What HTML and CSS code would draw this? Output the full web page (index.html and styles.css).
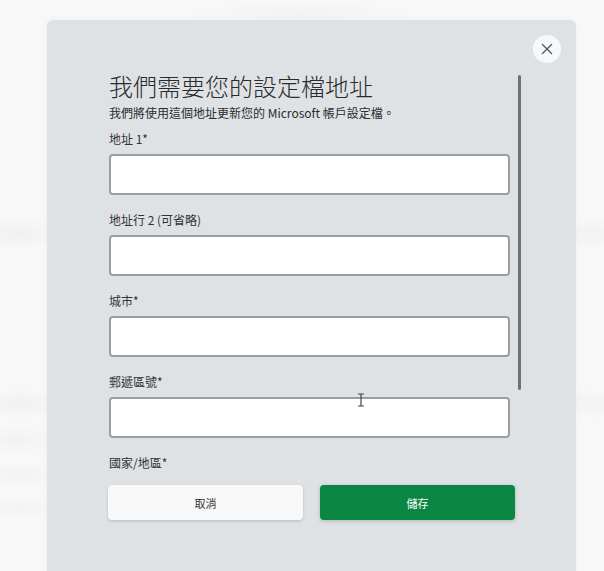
FILE: index.html
```html
<!DOCTYPE html>
<html lang="zh-Hant">
<head>
<meta charset="utf-8">
<title>設定檔地址</title>
<link rel="stylesheet" href="styles.css">
</head>
<body>
<div class="page">
  <div class="modal">
    <div class="modal-head">
      <button class="close" aria-label="關閉">
        <svg width="12" height="12" viewBox="0 0 12 12"><path d="M1.5 1.5 L10.5 10.5 M10.5 1.5 L1.5 10.5" stroke="#5a5a5a" stroke-width="1.4" stroke-linecap="round" fill="none"/></svg>
      </button>
    </div>
    <div class="modal-body">
      <div class="form">
        <h1 class="title">我們需要您的設定檔地址</h1>
        <p class="subtitle">我們將使用這個地址更新您的 Microsoft 帳戶設定檔。</p>
        <div class="field">
          <label class="label">地址 1*</label>
          <div class="input"></div>
        </div>
        <div class="field">
          <label class="label">地址行 2 (可省略)</label>
          <div class="input"></div>
        </div>
        <div class="field">
          <label class="label">城市*</label>
          <div class="input"></div>
        </div>
        <div class="field">
          <label class="label">郵遞區號*</label>
          <div class="input"></div>
        </div>
        <div class="field last">
          <label class="label">國家/地區*</label>
        </div>
        <div class="actions">
          <button class="btn cancel">取消</button>
          <button class="btn save">儲存</button>
        </div>
      </div>
      <div class="scroll-thumb"></div>
    </div>
    <svg class="ibeam" width="8" height="14" viewBox="0 0 8 14"><path d="M1 1 H7 M4 1 V13 M1 13 H7" stroke="#444" stroke-width="1.2" fill="none"/></svg>
  </div>
</div>
</body>
</html>
```
FILE: styles.css
```css
html, body {
  margin: 0;
  padding: 0;
}
body {
  width: 604px;
  height: 571px;
  overflow: hidden;
  font-family: "Noto Sans CJK TC", "Noto Sans", sans-serif;
  color: #2f2f2f;
  background-color: #f8f8f8;
  background-image:
    radial-gradient(ellipse 120px 14px at 300px 14px, rgba(0,0,0,0.025), rgba(0,0,0,0)),
    radial-gradient(ellipse 50px 16px at 18px 234px, rgba(0,0,0,0.03), rgba(0,0,0,0)),
    radial-gradient(ellipse 36px 16px at 592px 234px, rgba(0,0,0,0.028), rgba(0,0,0,0)),
    radial-gradient(ellipse 50px 16px at 18px 404px, rgba(0,0,0,0.03), rgba(0,0,0,0)),
    radial-gradient(ellipse 36px 16px at 592px 404px, rgba(0,0,0,0.028), rgba(0,0,0,0)),
    radial-gradient(ellipse 50px 14px at 18px 440px, rgba(0,0,0,0.022), rgba(0,0,0,0)),
    radial-gradient(ellipse 50px 14px at 18px 475px, rgba(0,0,0,0.022), rgba(0,0,0,0)),
    radial-gradient(ellipse 50px 14px at 18px 508px, rgba(0,0,0,0.02), rgba(0,0,0,0));
  background-repeat: no-repeat;
}
.page {
  padding: 20px 0 0 47px;
}
.modal {
  position: relative;
  width: 529px;
  height: 560px;
  background: #dee2e5;
  border-radius: 6px 6px 0 0;
  box-shadow: 0 0 6px rgba(0,0,0,0.04);
}
.modal-head {
  display: flex;
  justify-content: flex-end;
  padding: 15px 15px 0 0;
  height: 28px;
}
.close {
  width: 28px;
  height: 28px;
  border-radius: 50%;
  border: none;
  padding: 0;
  background: #f7f8f9;
  display: flex;
  align-items: center;
  justify-content: center;
}
.modal-body {
  display: flex;
  align-items: flex-start;
  padding: 9px 0 0 62px;
}
.form {
  width: 407px;
  display: flex;
  flex-direction: column;
}
.title {
  margin: 0;
  font-size: 24px;
  line-height: 28px;
  font-weight: 300;
  color: #2b2b2b;
}
.subtitle {
  margin: 5px 0 0;
  font-size: 12px;
  line-height: 16px;
  color: #2b2b2b;
}
.field {
  display: flex;
  flex-direction: column;
  gap: 7px;
  margin-bottom: 17px;
}
.subtitle + .field {
  margin-top: 10px;
}
.label {
  font-size: 12px;
  line-height: 16px;
  color: #333;
}
.input {
  width: 401px;
  height: 41px;
  box-sizing: border-box;
  background: #ffffff;
  border: 2px solid #9b9d9f;
  border-radius: 4px;
}
.field.last {
  margin-bottom: 14px;
}
.actions {
  display: flex;
  gap: 17px;
  margin-left: -1px;
}
.btn {
  width: 195px;
  height: 35px;
  border: none;
  border-radius: 4px;
  font-family: "Noto Sans CJK TC", "Noto Sans", sans-serif;
  font-size: 11px;
  padding: 0;
}
.cancel {
  background: #f8f8f8;
  color: #333;
  box-shadow: 0 1px 3px rgba(0,0,0,0.18);
}
.save {
  background: #0a8643;
  color: #ffffff;
  box-shadow: 0 1px 4px rgba(0,0,0,0.2);
}
.scroll-thumb {
  width: 3px;
  height: 315px;
  margin: 3px 0 0 2px;
  background: #6f7173;
  border-radius: 2px;
}
.ibeam {
  position: absolute;
  left: 310px;
  top: 373px;
}
```
